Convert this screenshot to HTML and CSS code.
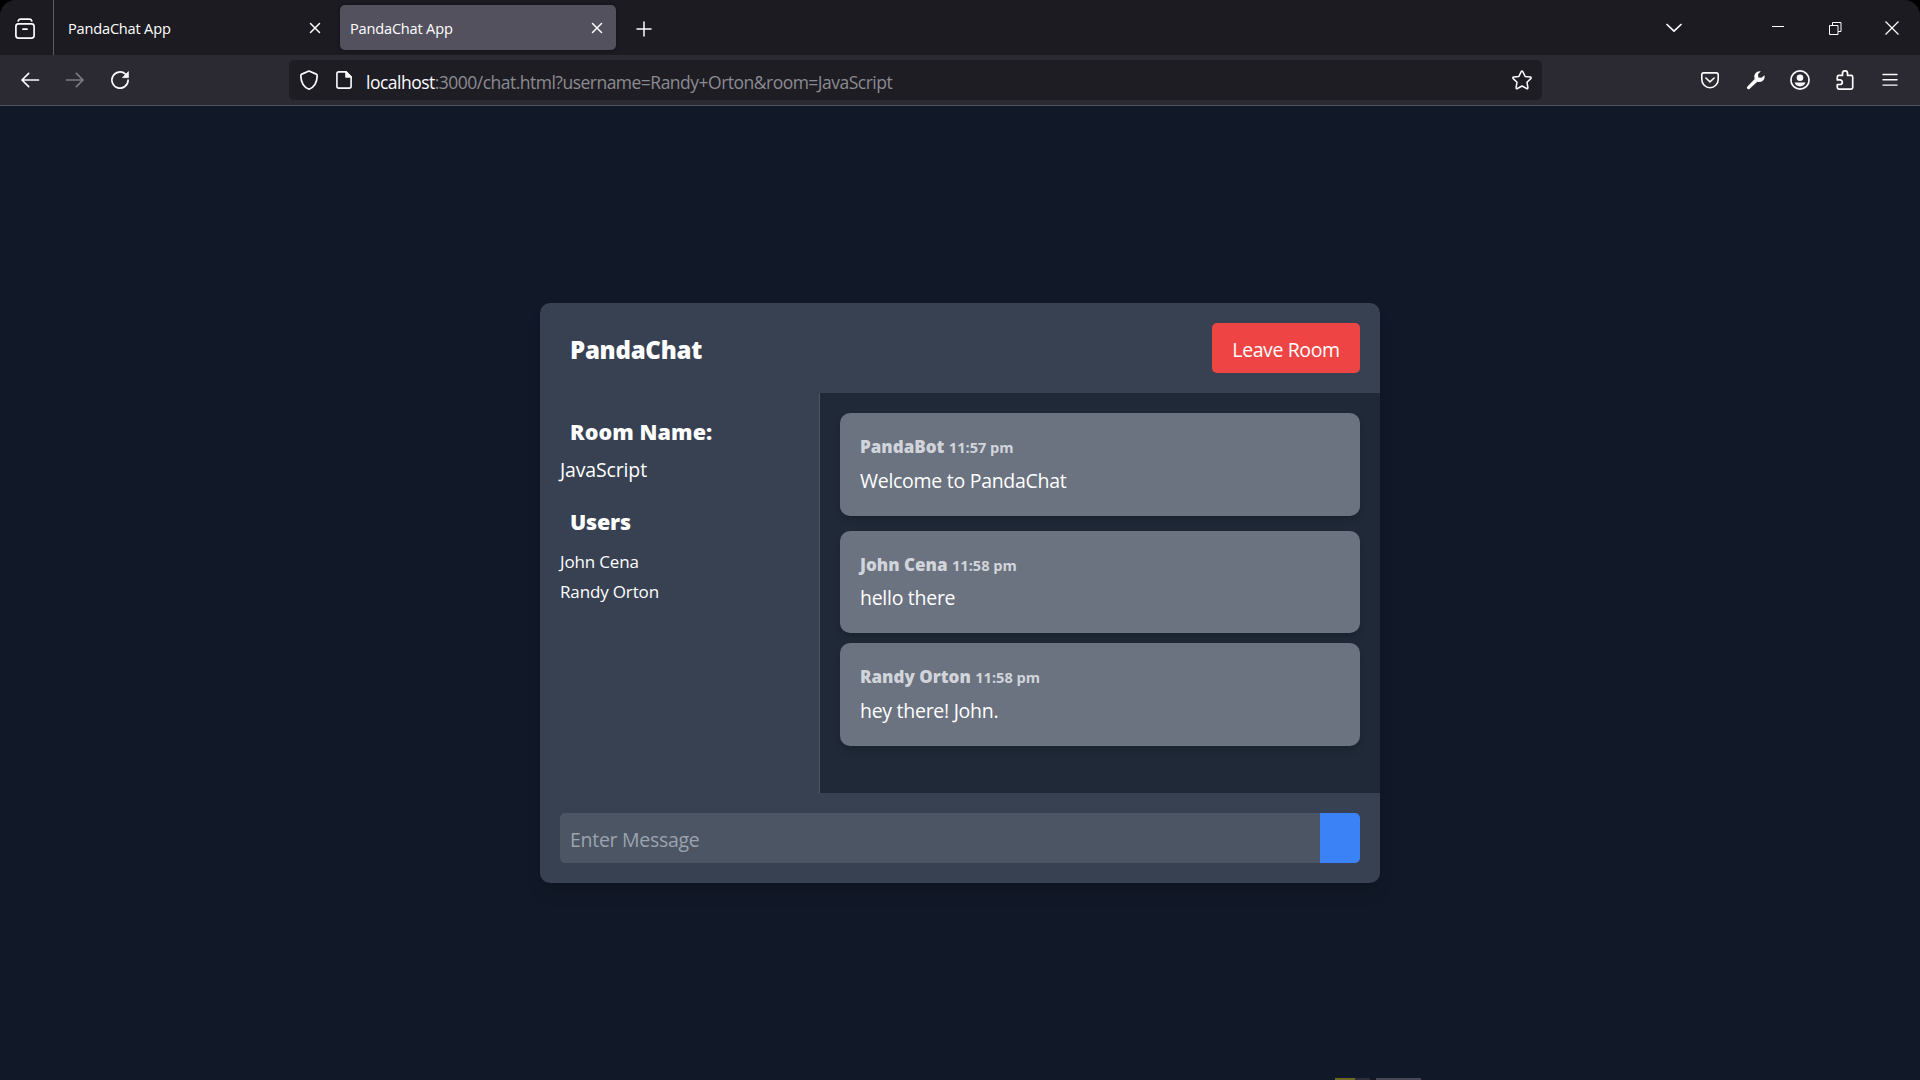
FILE: index.html
```html
<!DOCTYPE html>
<html lang="en">
<head>
<meta charset="utf-8">
<title>PandaChat App</title>
<link rel="stylesheet" href="styles.css">
</head>
<body>
<div class="window">
  <div class="tabstrip">
    <div class="view-button">
      <svg width="22" height="22" viewBox="0 0 22 22" fill="none" stroke="#fbfbfe" stroke-width="1.7" stroke-linecap="round"><rect x="1.9" y="5.9" width="18.2" height="14.2" rx="2.6"/><path d="M4.2 2.9C4.8 1.5 5.6 1.2 6.6 1.2h8.800c1 0 1.800.3 2.400 1.700M9 11.200h4"/></svg>
    </div>
    <div class="tab">
      <span class="tab-title">PandaChat App</span>
      <svg class="tab-close" width="12" height="12" viewBox="0 0 12 12" stroke="#fbfbfe" stroke-width="1.5" stroke-linecap="round"><path d="M1.500 1.500l9 9M10.500 1.500l-9 9"/></svg>
    </div>
    <div class="tab tab-active">
      <span class="tab-title">PandaChat App</span>
      <svg class="tab-close" width="12" height="12" viewBox="0 0 12 12" stroke="#fbfbfe" stroke-width="1.5" stroke-linecap="round"><path d="M1.500 1.500l9 9M10.500 1.500l-9 9"/></svg>
    </div>
    <svg class="new-tab" width="16" height="16" viewBox="0 0 16 16" stroke="#fbfbfe" stroke-width="1.500" stroke-linecap="round"><path d="M8 1v14M1 8h14"/></svg>
    <div class="window-controls">
      <svg class="all-tabs" width="18" height="12" viewBox="0 0 18 12" fill="none" stroke="#fbfbfe" stroke-width="1.700" stroke-linecap="round" stroke-linejoin="round"><path d="M2 2.500l7 6.700 7-6.700"/></svg>
      <svg class="minimize" width="12" height="14" viewBox="0 0 12 14"><path d="M0 5h12v1H0z" fill="#fff"/></svg>
      <svg class="restore" width="13" height="14" viewBox="0 0 13 14" fill="none" stroke="#fff"><path d="M.5 4.500h8.500v9H.5zM3.500 4.500v-3h8.500v9H9"/></svg>
      <svg class="close" width="14" height="14" viewBox="0 0 14 14" stroke="#fff" stroke-width="1.200"><path d="M.5.5l13 13M13.500.5l-13 13"/></svg>
    </div>
  </div>

  <div class="toolbar">
    <div class="nav">
      <svg width="20" height="20" viewBox="0 0 20 20" fill="none" stroke="#fbfbfe" stroke-width="1.700" stroke-linecap="round" stroke-linejoin="round"><path d="M18.500 10H2M8.700 3.300L2 10l6.700 6.700"/></svg>
      <svg width="20" height="20" viewBox="0 0 20 20" fill="none" stroke="#7c7b82" stroke-width="1.700" stroke-linecap="round" stroke-linejoin="round"><path d="M1.500 10H18M11.300 3.300L18 10l-6.700 6.700"/></svg>
      <svg width="20" height="20" viewBox="0 0 20 20" fill="none" stroke="#fbfbfe" stroke-width="1.700" stroke-linecap="round"><path d="M18.100 10.200A8.100 8.100 0 1 1 15.500 4.100"/><path d="M18.400 2v5.600h-5.600z" fill="#fbfbfe" stroke-width=".8" stroke-linejoin="round"/></svg>
    </div>
    <div class="urlbar">
      <svg class="shield" width="20" height="20" viewBox="0 0 20 20" fill="none" stroke="#fbfbfe" stroke-width="1.700" stroke-linejoin="round"><path d="M10 1L17.200 4.100Q18.200 4.600 18.200 5.700C18 12.500 15 17.300 10 19.200 5 17.300 2 12.500 1.800 5.700Q1.800 4.600 2.800 4.100z"/></svg>
      <svg class="page" width="16" height="18" viewBox="0 0 16 18" fill="none" stroke="#fbfbfe" stroke-width="1.600" stroke-linejoin="round"><path d="M2.800.9H10L15.100 6v9.200q0 1.900-1.900 1.900H2.800Q.9 17.100.9 15.200V2.800Q.9.9 2.800.9z"/><path d="M10 .9V6h5.100z" fill="#fbfbfe"/></svg>
      <span class="url"><span class="host">localhost</span>:3000/chat.html?username=Randy+Orton&amp;room=JavaScript</span>
      <svg class="star" width="20" height="20" viewBox="0 0 20 20" fill="none" stroke="#fbfbfe" stroke-width="1.500" stroke-linejoin="round"><path d="M9.200 1.700q.8-1.400 1.600 0l2.300 4.700 5.200.7q1.500.3.5 1.500L15 12.300l.9 5.200q.1 1.600-1.300 1L10 16l-4.600 2.500q-1.400.6-1.300-1L5 12.300 1.200 8.600Q.2 7.400 1.700 7.100l5.200-.7z"/></svg>
    </div>
    <div class="actions">
      <svg class="pocket" width="18" height="18" viewBox="0 0 18 18" fill="none" stroke="#fbfbfe" stroke-width="1.600" stroke-linecap="round" stroke-linejoin="round"><path d="M2.600 1.900h12.800q1.800 0 1.800 1.800v4.800a8.200 8.200 0 0 1-16.400 0V3.700q0-1.800 1.800-1.800zM4.900 7L9 10.800 13.100 7"/></svg>
      <svg class="wrench" width="20" height="20" viewBox="0 0 20 20"><path d="M18.400 5.200a5.400 5.400 0 0 1-7.100 6.500L3.700 18.700a1.500 1.500 0 0 1-2.300-2.300L8.700 9A5.500 5.500 0 0 1 14.800 1.300l-2.800 3 .3 3.200 3.200.2z" fill="#fbfbfe"/></svg>
      <svg class="account" width="20" height="20" viewBox="0 0 20 20" fill="#fbfbfe"><circle cx="10" cy="10" r="9.100" fill="none" stroke="#fbfbfe" stroke-width="1.700"/><circle cx="10" cy="7.800" r="3.300"/><path d="M4.600 12.600h10.800C15 15 12.700 16.400 10 16.400S5 15 4.600 12.600z"/></svg>
      <svg class="extensions" width="18" height="20" viewBox="0 0 18 20" fill="none" stroke="#fbfbfe" stroke-width="1.700" stroke-linejoin="round"><path d="M2.900 5.400H6.500V3.300a2.500 2.500 0 0 1 5 0V5.400h3.600q1.600 0 1.600 1.600v10.500q0 1.600-1.600 1.600H2.900q-1.600 0-1.600-1.600V14.500H4a2.200 2.200 0 0 0 0-4.600H1.300V7q0-1.600 1.600-1.600z"/></svg>
      <svg class="menu" width="16" height="14" viewBox="0 0 16 14" stroke="#fbfbfe" stroke-width="1.400" stroke-linecap="round"><path d="M1 1.500h14M1 6.800h14M1 12.100h14"/></svg>
    </div>
  </div>

  <main class="page-content">
    <section class="chat">
      <header class="chat-header">
        <h1 class="brand">PandaChat</h1>
        <button class="leave">Leave Room</button>
      </header>
      <div class="chat-main">
        <aside class="sidebar">
          <h2 class="side-title">Room Name:</h2>
          <p class="room-name">JavaScript</p>
          <h2 class="side-title users-title">Users</h2>
          <ul class="users">
            <li>John Cena</li>
            <li>Randy Orton</li>
          </ul>
        </aside>
        <div class="messages">
          <article class="message message-first">
            <p class="meta">PandaBot <span class="time">11:57 pm</span></p>
            <p class="text">Welcome to PandaChat</p>
          </article>
          <article class="message message-compact">
            <p class="meta">John Cena <span class="time">11:58 pm</span></p>
            <p class="text">hello there</p>
          </article>
          <article class="message">
            <p class="meta">Randy Orton <span class="time">11:58 pm</span></p>
            <p class="text">hey there! John.</p>
          </article>
        </div>
      </div>
      <form class="composer">
        <input class="field" type="text" placeholder="Enter Message">
        <button class="send" type="button" aria-label="Send"></button>
      </form>
    </section>
  </main>
  <div class="overlay-marks"><i class="mark-olive"></i><i class="mark-dim"></i><i class="mark-gray"></i></div>
</div>
</body>
</html>
```
FILE: styles.css
```css
* { box-sizing: border-box; margin: 0; padding: 0; }

body {
  background: #000;
  font-family: "Open Sans", "Noto Sans", sans-serif;
  color: #fff;
  overflow: hidden;
}

svg { display: block; flex: none; }

.window {
  position: relative;
  display: flex;
  flex-direction: column;
  width: 1920px;
  height: 1080px;
  overflow: hidden;
  background: #111827;
  border-radius: 16px 16px 0 0;
}

/* Tab strip */
.tabstrip {
  display: flex;
  align-items: center;
  height: 55px;
  background: #1c1b22;
}

.view-button {
  display: flex;
  align-items: center;
  width: 54px;
  height: 55px;
  padding: 2px 0 0 14px;
  border-right: 1px solid #5b5b66;
}

.tab {
  display: flex;
  align-items: center;
  justify-content: space-between;
  width: 276px;
  height: 45px;
  margin-right: 10px;
  padding: 0 13px 0 10px;
  border-radius: 5px;
}

.view-button + .tab { margin-left: 4px; margin-right: 6px; }

.tab-active {
  background: #53515e;
  box-shadow: 0 0 4px rgba(0, 0, 0, .4);
}

.tab-title {
  font-size: 14.6px;
  letter-spacing: -.2px;
  line-height: 20px;
}

.new-tab { margin: 2px 0 0 10px; }

.window-controls {
  display: flex;
  align-items: center;
  margin-left: auto;
  padding-right: 21px;
}

.minimize { margin-left: 89px; }
.restore { margin-left: 45px; }
.close { margin-left: 43px; }

/* Navigation toolbar */
.toolbar {
  display: flex;
  align-items: center;
  height: 51px;
  background: #2b2a33;
  border-bottom: 1px solid #53535f;
}

.nav {
  display: flex;
  gap: 25px;
  width: 289px;
  padding-left: 20px;
}

.urlbar {
  display: flex;
  align-items: center;
  width: 1253px;
  height: 40px;
  padding: 0 10px;
  background: #1e1d24;
  border-radius: 5px;
}

.page { margin-left: 17px; }

.url {
  margin-left: 14px;
  padding-top: 4px;
  color: #8c8b91;
  font-size: 17.5px;
  letter-spacing: -.51px;
  line-height: 24px;
  white-space: nowrap;
}

.host { color: #fbfbfe; }

.star { margin-left: auto; }

.actions {
  display: flex;
  align-items: center;
  flex: 1;
  padding-left: 159px;
}

.wrench { margin-left: 27px; }
.account { margin-left: 24px; }
.extensions { margin-left: 26px; }
.menu { margin-left: 28px; }

/* Chat page */
.page-content {
  display: flex;
  flex: 1;
  align-items: center;
  justify-content: center;
}

.chat {
  width: 840px;
  height: 580px;
  overflow: hidden;
  background: #374151;
  border-radius: 10px;
  box-shadow: 0 12px 19px -4px rgba(0, 0, 0, .1), 0 5px 8px -5px rgba(0, 0, 0, .1);
}

.chat-header {
  display: flex;
  align-items: center;
  justify-content: space-between;
  height: 90px;
  padding: 0 20px 0 30px;
}

.brand {
  padding-top: 3px;
  font-size: 24px;
  font-weight: 800;
  line-height: 32px;
  letter-spacing: -.25px;
}

.leave {
  width: 148px;
  height: 50px;
  padding-top: 3px;
  border: 0;
  border-radius: 5px;
  background: #ef4444;
  color: #fff;
  font: 19.5px/24px "Open Sans", sans-serif;
  letter-spacing: -.4px;
}

.chat-main { display: flex; height: 400px; }

.sidebar {
  width: 280px;
  padding: 25px 20px 0;
  border-right: 1px solid #4b5563;
}

.side-title {
  padding-left: 10px;
  font-size: 21.5px;
  font-weight: 800;
  line-height: 28px;
  letter-spacing: .1px;
}

.room-name {
  margin-top: 9px;
  font-size: 19.5px;
  line-height: 30px;
  letter-spacing: -.15px;
}

.users-title { margin-top: 23px; letter-spacing: -.2px; }

.users {
  margin-top: 11px;
  list-style: none;
  font-size: 17px;
  line-height: 30px;
  letter-spacing: -.15px;
}

.messages {
  display: flex;
  flex: 1;
  flex-direction: column;
  gap: 10px;
  padding: 20px;
  background: #1f2937;
}

.message {
  height: 103px;
  padding: 24px 20px 0;
  background: #6b7280;
  border-radius: 10px;
  box-shadow: 0 5px 8px -1px rgba(0, 0, 0, .1), 0 3px 5px -2px rgba(0, 0, 0, .1);
}

.message-first { margin-bottom: 5px; }
.message-compact { height: 102px; }

.meta {
  color: #d1d5db;
  font-size: 17px;
  font-weight: 800;
  line-height: 20px;
}

.time { font-size: 14.6px; font-weight: 700; }

.text {
  margin-top: 9px;
  font-size: 19.5px;
  line-height: 30px;
  letter-spacing: -.28px;
}

.message-compact .text { margin-top: 8px; }

.composer {
  display: flex;
  height: 90px;
  padding: 20px;
}

.field {
  flex: 1;
  padding: 3px 10px 0;
  border: 0;
  border-radius: 5px 0 0 5px;
  background: #4b5563;
  color: #fff;
  font: 19.5px/24px "Open Sans", sans-serif;
  letter-spacing: -.28px;
}

.field::placeholder { color: #9ca3af; opacity: 1; }

.send {
  width: 40px;
  border: 0;
  border-radius: 0 5px 5px 0;
  background: #3b82f6;
}

/* Slivers of a bar peeking over the bottom edge */
.overlay-marks {
  position: absolute;
  left: 1335px;
  bottom: 0;
  display: flex;
  height: 2px;
}

.mark-olive { width: 20px; background: #6c6a26; }
.mark-dim { width: 15px; background: #2c2e3a; }
.mark-gray { width: 45px; margin-left: 6px; background: #454854; }
```
